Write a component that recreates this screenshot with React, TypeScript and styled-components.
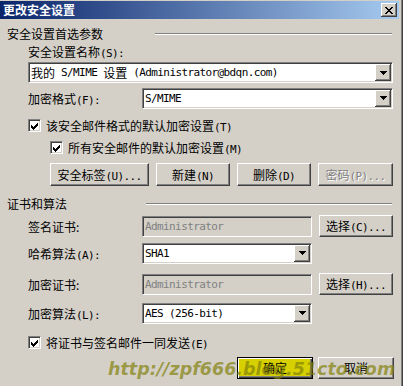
import React from 'react';
import styled, { createGlobalStyle } from 'styled-components';

const GlobalStyle = createGlobalStyle`
  html, body {
    margin: 0;
    padding: 0;
    background: #d4d0c8;
  }
  body {
    font-family: "Noto Sans CJK SC", "Noto Sans", sans-serif;
    font-size: 12px;
    color: #000;
  }
`;

const Window = styled.div`
  position: relative;
  width: 403px;
  height: 386px;
  box-sizing: border-box;
  padding: 1px 4px 0 0;
  background: #d4d0c8;
  box-shadow: inset -1px 0 #404040, inset -2px 0 #808080;
  overflow: hidden;
`;

const TitleBar = styled.div`
  height: 18px;
  display: flex;
  align-items: center;
  justify-content: space-between;
  padding: 0 2px 0 3px;
  background: linear-gradient(to right, #0a246a, #a6caf0);
  color: #fff;
  font-weight: bold;
  line-height: 18px;
`;

const CloseButton = styled.div`
  width: 16px;
  height: 14px;
  display: flex;
  align-items: center;
  justify-content: center;
  background: #d4d0c8;
  box-shadow: inset -1px -1px #404040, inset 1px 1px #fff, inset -2px -2px #808080;
`;

const Body = styled.div`
  padding: 0 6px 0 7px;
`;

const GroupHeader = styled.div<{ $lineAt: number; $mt: number }>`
  display: grid;
  grid-template-columns: ${p => p.$lineAt}px 1fr;
  align-items: center;
  height: 16px;
  margin-top: ${p => p.$mt}px;
  white-space: nowrap;
`;

const Etched = styled.div`
  height: 2px;
  box-sizing: border-box;
  border-top: 1px solid #808080;
  border-bottom: 1px solid #fff;
  margin-right: 1px;
`;

const TextRow = styled.div<{ $mt: number }>`
  height: 16px;
  line-height: 16px;
  margin-top: ${p => p.$mt}px;
  padding-left: 21px;
  white-space: nowrap;
`;

const BlockRow = styled.div<{ $mt: number }>`
  margin-top: ${p => p.$mt}px;
  padding-left: 21px;
`;

const FieldRow = styled.div<{ $mt: number }>`
  display: flex;
  align-items: center;
  gap: 7px;
  height: 22px;
  margin-top: ${p => p.$mt}px;
  padding-left: 21px;
`;

const FieldLabel = styled.span`
  width: 107px;
  flex: none;
  white-space: nowrap;
`;

const Sunken = styled.div<{ $w?: number; $disabled?: boolean }>`
  height: 21px;
  box-sizing: border-box;
  width: ${p => (p.$w ? `${p.$w}px` : 'auto')};
  flex: ${p => (p.$w ? 'none' : '1')};
  display: flex;
  align-items: stretch;
  padding: 1px;
  background: ${p => (p.$disabled ? '#d4d0c8' : '#fff')};
  color: ${p => (p.$disabled ? '#808080' : '#000')};
  border: 1px solid;
  border-color: #808080 #fff #fff #808080;
  box-shadow: inset 1px 1px #404040, inset -1px -1px #d4d0c8;
`;

const FieldText = styled.div`
  flex: 1;
  padding-left: 1px;
  display: flex;
  align-items: center;
  white-space: pre;
  overflow: hidden;
`;

const DropButton = styled.div`
  width: 16px;
  flex: none;
  display: flex;
  align-items: center;
  justify-content: center;
  background: #d4d0c8;
  box-shadow: inset -1px -1px #404040, inset 1px 1px #fff, inset -2px -2px #808080;
`;

const CheckRow = styled.div<{ $indent: number; $mt: number }>`
  display: flex;
  align-items: center;
  gap: 5px;
  height: 16px;
  margin-top: ${p => p.$mt}px;
  padding-left: ${p => p.$indent}px;
  white-space: nowrap;
`;

const CheckBox = styled.div`
  width: 13px;
  height: 13px;
  box-sizing: border-box;
  flex: none;
  padding: 1px;
  background: #fff;
  border: 1px solid;
  border-color: #808080 #fff #fff #808080;
  box-shadow: inset 1px 1px #404040, inset -1px -1px #d4d0c8;
  svg {
    display: block;
  }
`;

const ButtonRow = styled.div<{ $mt: number }>`
  display: flex;
  gap: 7px;
  margin-top: ${p => p.$mt}px;
  padding-left: 43px;
`;

const Footer = styled.div<{ $mt: number }>`
  display: flex;
  justify-content: flex-end;
  gap: 5px;
  margin-top: ${p => p.$mt}px;
  margin-right: -1px;
`;

const Button = styled.button<{ $w: number; $h: number; $default?: boolean }>`
  width: ${p => p.$w}px;
  height: ${p => p.$h}px;
  flex: none;
  box-sizing: border-box;
  margin: 0;
  padding: 0 0 1px;
  font: inherit;
  color: #000;
  white-space: nowrap;
  background: ${p => (p.$default ? '#d6d000' : '#d4d0c8')};
  border: 1px solid;
  border-color: ${p => (p.$default ? '#000' : '#fff #404040 #404040 #fff')};
  box-shadow: ${p =>
    p.$default
      ? 'inset 1px 1px #fff, inset -1px -1px #404040, inset -2px -2px #808080'
      : 'inset -1px -1px #808080'};
  &:disabled {
    color: #808080;
    text-shadow: 1px 1px #fff;
  }
`;

const Latin = styled.span`
  font-family: "DejaVu Sans Mono", "Liberation Mono", monospace;
  font-size: 11px;
  letter-spacing: -0.6px;
`;

const Watermark = styled.div`
  position: absolute;
  left: 108px;
  top: 361px;
  font-family: "DejaVu Sans", Verdana, sans-serif;
  font-size: 17.5px;
  font-weight: bold;
  font-style: italic;
  line-height: 1;
  color: rgba(130, 128, 10, 0.7);
  white-space: nowrap;
  pointer-events: none;
`;

const latinRun = /^[\u0000-\u02ff]+$/;

function Txt({ children }: { children: string }) {
  const parts = children.split(/([\u0000-\u02ff]+)/).filter(Boolean);
  return (
    <>
      {parts.map((part, i) =>
        latinRun.test(part) ? <Latin key={i}>{part}</Latin> : <React.Fragment key={i}>{part}</React.Fragment>
      )}
    </>
  );
}

const Arrow = () => (
  <svg width="7" height="4" viewBox="0 0 7 4" shapeRendering="crispEdges">
    <path d="M0 0h7v1H0zM1 1h5v1H1zM2 2h3v1H2zM3 3h1v1H3z" fill="#000" />
  </svg>
);

const Tick = () => (
  <svg width="9" height="9" viewBox="0 0 9 9" shapeRendering="crispEdges">
    <path
      d="M1 4h1v3H1zM2 5h1v3H2zM3 6h1v3H3zM4 5h1v3H4zM5 4h1v3H5zM6 3h1v3H6zM7 2h1v3H7z"
      fill="#000"
    />
  </svg>
);

const CloseGlyph = () => (
  <svg width="8" height="7" viewBox="0 0 8 7" shapeRendering="crispEdges">
    <path
      d="M0 0h2v1H0zM6 0h2v1H6zM1 1h2v1H1zM5 1h2v1H5zM2 2h4v1H2zM3 3h2v1H3zM2 4h4v1H2zM1 5h2v1H1zM5 5h2v1H5zM0 6h2v1H0zM6 6h2v1H6z"
      fill="#000"
    />
  </svg>
);

function ComboBox({ value, width }: { value: string; width?: number }) {
  return (
    <Sunken $w={width}>
      <FieldText>
        <Txt>{value}</Txt>
      </FieldText>
      <DropButton>
        <Arrow />
      </DropButton>
    </Sunken>
  );
}

function Check({ label, indent, mt }: { label: string; indent: number; mt: number }) {
  return (
    <CheckRow $indent={indent} $mt={mt}>
      <CheckBox>
        <Tick />
      </CheckBox>
      <span>
        <Txt>{label}</Txt>
      </span>
    </CheckRow>
  );
}

export default function App() {
  return (
    <>
      <GlobalStyle />
      <Window>
        <TitleBar>
          <span>更改安全设置</span>
          <CloseButton>
            <CloseGlyph />
          </CloseButton>
        </TitleBar>

        <Body>
          <GroupHeader $lineAt={148} $mt={6}>
            <span>安全设置首选参数</span>
            <Etched />
          </GroupHeader>

          <TextRow $mt={3}>
            <Txt>安全设置名称(S):</Txt>
          </TextRow>
          <BlockRow $mt={2}>
            <ComboBox value="我的 S/MIME 设置 (Administrator@bdqn.com)" />
          </BlockRow>

          <FieldRow $mt={4}>
            <FieldLabel>
              <Txt>加密格式(F):</Txt>
            </FieldLabel>
            <ComboBox value="S/MIME" />
          </FieldRow>

          <Check label="该安全邮件格式的默认加密设置(T)" indent={21} mt={8} />
          <Check label="所有安全邮件的默认加密设置(M)" indent={43} mt={6} />

          <ButtonRow $mt={8}>
            <Button $w={99} $h={23}>
              <Txt>安全标签(U)...</Txt>
            </Button>
            <Button $w={74} $h={23}>
              <Txt>新建(N)</Txt>
            </Button>
            <Button $w={74} $h={23}>
              <Txt>删除(D)</Txt>
            </Button>
            <Button $w={75} $h={23} disabled>
              <Txt>密码(P)...</Txt>
            </Button>
          </ButtonRow>

          <GroupHeader $lineAt={139} $mt={9}>
            <span>证书和算法</span>
            <Etched />
          </GroupHeader>

          <FieldRow $mt={4}>
            <FieldLabel>签名证书:</FieldLabel>
            <Sunken $w={170} $disabled>
              <FieldText>
                <Txt>Administrator</Txt>
              </FieldText>
            </Sunken>
            <Button $w={74} $h={22}>
              <Txt>选择(C)...</Txt>
            </Button>
          </FieldRow>

          <FieldRow $mt={5}>
            <FieldLabel>
              <Txt>哈希算法(A):</Txt>
            </FieldLabel>
            <ComboBox value="SHA1" width={170} />
          </FieldRow>

          <FieldRow $mt={9}>
            <FieldLabel>加密证书:</FieldLabel>
            <Sunken $w={170} $disabled>
              <FieldText>
                <Txt>Administrator</Txt>
              </FieldText>
            </Sunken>
            <Button $w={74} $h={22}>
              <Txt>选择(H)...</Txt>
            </Button>
          </FieldRow>

          <FieldRow $mt={7}>
            <FieldLabel>
              <Txt>加密算法(L):</Txt>
            </FieldLabel>
            <ComboBox value="AES (256-bit)" width={170} />
          </FieldRow>

          <Check label="将证书与签名邮件一同发送(E)" indent={21} mt={10} />

          <Footer $mt={7}>
            <Button $w={76} $h={22} $default>
              确定
            </Button>
            <Button $w={76} $h={22}>
              取消
            </Button>
          </Footer>
        </Body>

        <Watermark>http://zpf666.blog.51cto.com</Watermark>
      </Window>
    </>
  );
}
